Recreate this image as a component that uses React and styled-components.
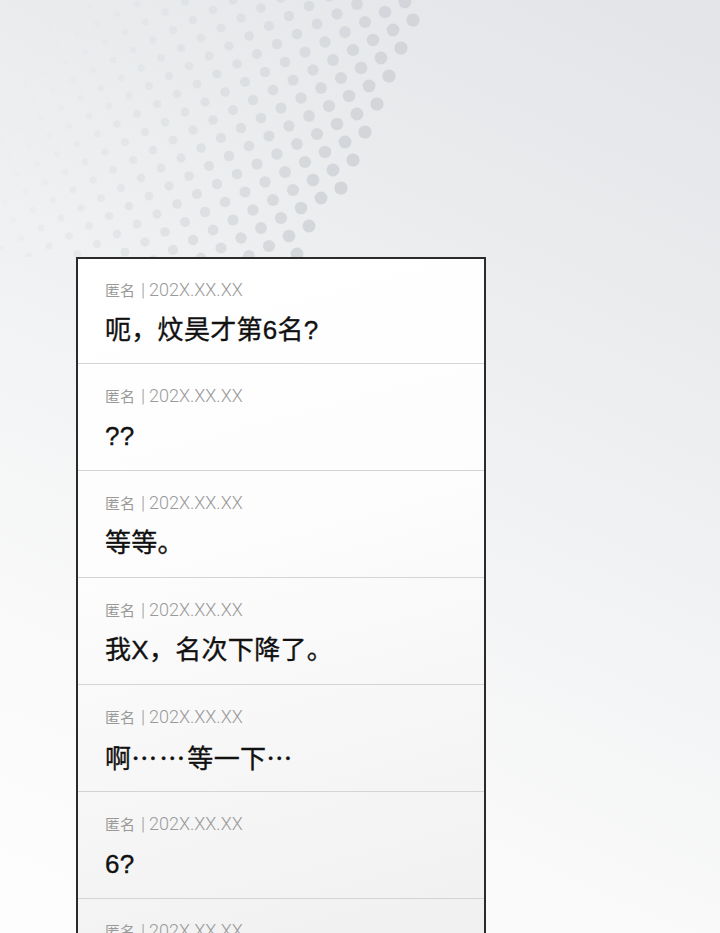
import React from 'react';
import styled, { createGlobalStyle } from 'styled-components';

const GlobalStyle = createGlobalStyle`
  html, body {
    margin: 0;
    padding: 0;
    height: 933px;
    overflow: hidden;
  }
  #root {
    height: 100%;
  }
`;

const Page = styled.div`
  width: 720px;
  height: 933px;
  overflow: hidden;
  background: linear-gradient(
    205deg,
    #e2e4e7 0%,
    #eaecee 28%,
    #f3f4f5 55%,
    #fafafa 78%,
    #fdfdfd 100%
  );
  font-family: "Liberation Sans", "Noto Sans CJK SC", sans-serif;
`;

const Backdrop = styled.svg`
  display: block;
  width: 720px;
  height: 257px;
`;

const Thread = styled.div`
  width: 410px;
  margin-left: 76px;
  box-sizing: border-box;
  border: 2px solid #2b2b2b;
  border-bottom: none;
  background: linear-gradient(
    165deg,
    #ffffff 0%,
    #fdfdfd 35%,
    #f5f5f5 70%,
    #eeeeee 100%
  );
`;

const Comment = styled.div`
  box-sizing: border-box;
  height: 107px;
  padding: 22px 0 0 27px;
  border-bottom: 1px solid #d4d4d4;

  &:first-child {
    height: 105px;
    padding-top: 21px;
  }
`;

const Meta = styled.div`
  display: flex;
  align-items: center;
  height: 20px;
  color: #9a9a9a;
  white-space: nowrap;
`;

const Author = styled.span`
  font-family: "Noto Sans CJK SC", sans-serif;
  font-size: 15px;
  line-height: 20px;
`;

const Divider = styled.span`
  font-family: "Roboto", "Liberation Sans", sans-serif;
  font-weight: 300;
  font-size: 18px;
  line-height: 20px;
  margin: 0 4px 0 6px;
`;

const Stamp = styled.span`
  font-family: "Roboto", "Liberation Sans", sans-serif;
  font-weight: 300;
  font-size: 18px;
  line-height: 20px;
  letter-spacing: 0px;
`;

const Message = styled.div`
  margin-top: 14px;
  height: 32px;
  font-size: 26px;
  font-weight: 400;
  line-height: 32px;
  color: #111111;
  white-space: nowrap;
  letter-spacing: 0.3px;
  -webkit-text-stroke: 0.35px #111111;
`;

const Ellipsis = styled.span`
  font-family: "Noto Sans CJK SC", sans-serif;
  letter-spacing: 2px;
`;

const comments = [
  '呃，炆昊才第6名?',
  '??',
  '等等。',
  '我X，名次下降了。',
  '啊……等一下…',
  '6?',
  '……',
];

// ellipses sit mid-height in the CJK face, so set them apart
const renderText = text =>
  text.split(/(…+)/).map((part, idx) =>
    part.startsWith('…') ? <Ellipsis key={idx}>{part}</Ellipsis> : part
  );

// halftone fan: a slanted lattice of dots that shrink and fade to the left
const buildDots = () => {
  const origin = { x: 413, y: 20 };
  const a = { x: -20, y: 10 };
  const b = { x: 8, y: 18 };
  const n = { x: -0.9132, y: -0.4077 };
  const dots = [];
  for (let i = -30; i <= 30; i++) {
    for (let j = -30; j <= 30; j++) {
      const x = origin.x + i * a.x + j * b.x;
      const y = origin.y + i * a.y + j * b.y;
      if (x < -10 || x > 730 || y < -12 || y > 264) continue;
      const d = (x - origin.x) * n.x + (y - origin.y) * n.y;
      if (d < -3 || d > 340) continue;
      const t = Math.max(0, d) / 340;
      const r = 6.6 * (1 - t * 0.65);
      const opacity = Math.pow(1 - t, 1.2) * 0.9;
      dots.push({ x, y, r, opacity, key: `${i}-${j}` });
    }
  }
  return dots;
};

const dots = buildDots();

const App = () => (
  <Page>
    <GlobalStyle />
    <Backdrop viewBox="0 0 720 257">
      <defs>
        <filter id="soft" x="-10%" y="-10%" width="120%" height="120%">
          <feGaussianBlur stdDeviation="0.7" />
        </filter>
      </defs>
      <g filter="url(#soft)" fill="#d0d3d7">
        {dots.map(dot => (
          <circle
            key={dot.key}
            cx={dot.x}
            cy={dot.y}
            r={dot.r}
            opacity={dot.opacity}
          />
        ))}
      </g>
    </Backdrop>
    <Thread>
      {comments.map((text, idx) => (
        <Comment key={idx}>
          <Meta>
            <Author>匿名</Author>
            <Divider>|</Divider>
            <Stamp>202X.XX.XX</Stamp>
          </Meta>
          <Message>{renderText(text)}</Message>
        </Comment>
      ))}
    </Thread>
  </Page>
);

export default App;
